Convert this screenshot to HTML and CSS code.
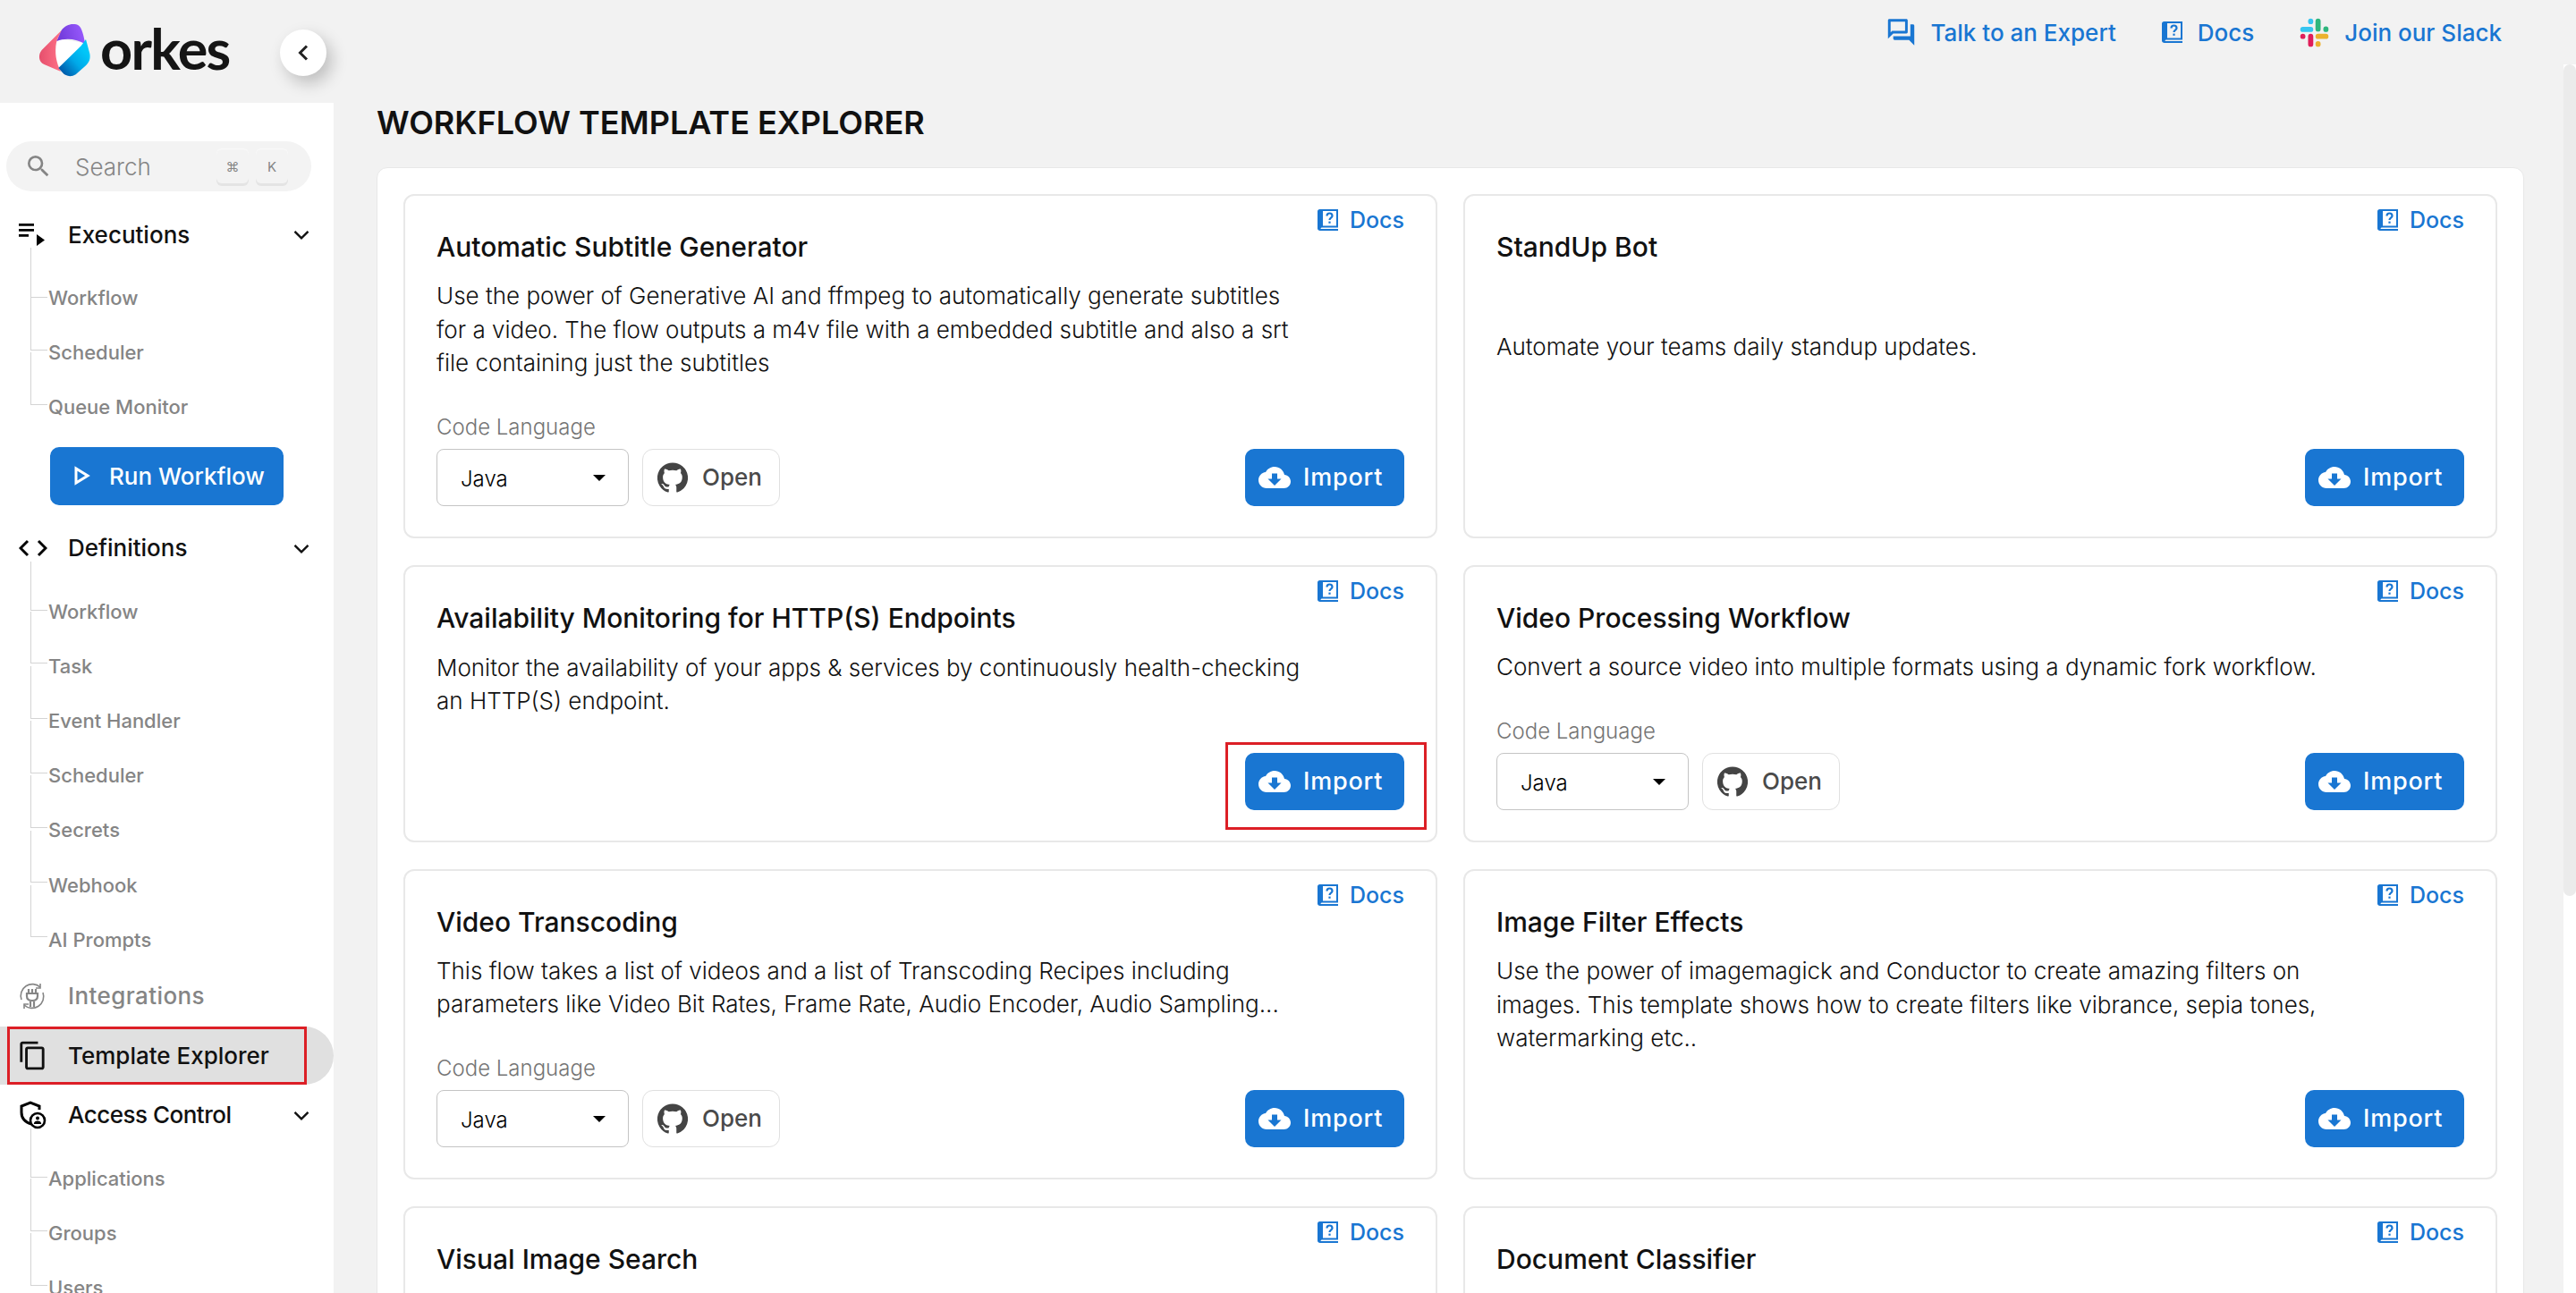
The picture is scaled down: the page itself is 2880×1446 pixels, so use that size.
FILE: index.html
```html
<!DOCTYPE html>
<html lang="en">
  <head>
    <title>Workflow Template Explorer</title>
    <meta charset="UTF-8" />
    <link rel="stylesheet" href="styles.css">
  </head>
  <body>
    <svg class="icon-defs" width="0" height="0">
      <symbol id="i-book" viewBox="0 0 23 24">
        <path fill="#1976d2" d="M2.5 0H23v20.5H5.5c-1 0-2 .5-2 1.2S4.500 22 5.500 22H23v2H3c-1.700 0-3-1-3-2.500V2.500C0 1 1 0 2.500 0zM6 2v16.500h15V2H6z"/>
        <path fill="none" stroke="#1976d2" stroke-width="2.200" d="M10.500 7.500c0-4 6-4 6 0 0 2.200-3 2.200-3 4.500"/>
        <rect x="12.400" y="13.600" width="2.200" height="2.200" fill="#1976d2"/>
      </symbol>
      <symbol id="i-cloud" viewBox="0 0 24 24">
        <path fill="#fff" d="M19.350 10.040C18.670 6.590 15.640 4 12 4 9.110 4 6.600 5.640 5.350 8.040 2.340 8.360 0 10.910 0 14c0 3.310 2.690 6 6 6h13c2.760 0 5-2.240 5-5 0-2.640-2.050-4.780-4.650-4.960zM17 13l-5 5-5-5h3V9h4v4h3z"/>
      </symbol>
      <symbol id="i-github" viewBox="0 0 24 24">
        <path fill="#444" d="M12 .3a12 12 0 0 0-3.800 23.400c.6.100.8-.3.8-.6v-2c-3.300.7-4-1.600-4-1.600-.6-1.400-1.400-1.800-1.400-1.800-1-.7.1-.7.1-.7 1.200.1 1.800 1.200 1.800 1.200 1 1.800 2.800 1.300 3.500 1 .1-.8.4-1.300.8-1.600-2.700-.3-5.500-1.300-5.500-6 0-1.200.5-2.300 1.300-3.100-.2-.4-.6-1.600 0-3.200 0 0 1-.3 3.400 1.200a11.500 11.500 0 0 1 6 0c2.300-1.500 3.300-1.200 3.300-1.200.6 1.600.2 2.800 0 3.200.9.8 1.300 1.900 1.300 3.200 0 4.600-2.800 5.600-5.500 5.900.5.4.9 1 .9 2.200v3.300c0 .3.1.7.8.6A12 12 0 0 0 12 .3"/>
      </symbol>
      <symbol id="i-chevron" viewBox="0 0 18 12">
        <path fill="none" stroke="#111" stroke-width="2.400" d="M1.500 1.800 9 9.300l7.500-7.500"/>
      </symbol>
    </svg>

    <div class="app">
      <aside class="sidebar">
        <div class="brand">
          <div class="logo">
            <svg class="logo-mark" width="80" height="72" viewBox="0 0 240 216">
              <defs>
                <linearGradient id="lg-pink" x1="0" y1="0.500" x2="1" y2="0.500">
                  <stop offset="0" stop-color="#e64f6d"/>
                  <stop offset="1" stop-color="#ff7488"/>
                </linearGradient>
                <linearGradient id="lg-purple" x1="0" y1="0.500" x2="1" y2="0.300">
                  <stop offset="0" stop-color="#6f38d8"/>
                  <stop offset="1" stop-color="#9a5cff"/>
                </linearGradient>
                <linearGradient id="lg-blue" x1="0.150" y1="0.950" x2="0.800" y2="0.300">
                  <stop offset="0" stop-color="#0058a8"/>
                  <stop offset="0.550" stop-color="#00a8e8"/>
                  <stop offset="1" stop-color="#00c6f8"/>
                </linearGradient>
              </defs>
              <path fill="#fff" d="M84 70 172 84 170 100 92 170 78 130z"/>
              <path fill="url(#lg-pink)" d="M98 42 32 108C20 122 20 148 40 156L96 180 90 168C78 140 74 100 84 72L100 40z"/>
              <path fill="url(#lg-purple)" d="M98 42C110 24 130 18 148 22 164 26 170 46 178 88 150 70 112 66 82 78z"/>
              <path fill="url(#lg-blue)" d="M180 72 193 120C196 136 192 148 180 160L146 190C130 200 112 196 102 184L88 168 164 94z"/>
            </svg>
            <span class="logo-text">orkes</span>
          </div>
          <button type="button" class="collapse-btn">
            <svg width="14" height="20" viewBox="0 0 14 20"><path fill="none" stroke="#222" stroke-width="3" d="M11 2.500 3.500 10l7.500 7.500"/></svg>
          </button>
        </div>

        <nav class="nav">
          <div class="search">
            <svg class="search-icon" width="32" height="32" viewBox="0 0 24 24"><path fill="#858585" d="M15.500 14h-.79l-.28-.27A6.471 6.471 0 0 0 16 9.500 6.500 6.500 0 1 0 9.500 16c1.610 0 3.090-.59 4.230-1.570l.27.28v.79l5 4.990L20.490 19l-4.990-5zm-6 0C7.010 14 5 11.990 5 9.500S7.010 5 9.500 5 14 7.010 14 9.500 11.990 14 9.500 14z"/></svg>
            <span class="search-label">Search</span>
            <span class="kbd">⌘</span>
            <span class="kbd">K</span>
          </div>

          <div class="nav-row nav-row-first">
            <svg class="nav-icon" width="30" height="26" viewBox="0 0 30 26"><path fill="#000" d="M0 1h17v2.800H0zM0 7h17v2.800H0zM0 13h11v2.800H0zM20 13l9 6.500-9 6.500z"/></svg>
            <span class="nav-title">Executions</span>
            <svg class="nav-chevron" width="18" height="12"><use href="#i-chevron"/></svg>
          </div>
          <ul class="sub-list">
            <li>Workflow</li>
            <li>Scheduler</li>
            <li>Queue Monitor</li>
          </ul>

          <button type="button" class="run-btn">
            <svg width="18" height="22" viewBox="0 0 18 22"><path fill="none" stroke="#fff" stroke-width="3" d="M2 3v16l13-8z"/></svg>
            Run Workflow
          </button>

          <div class="nav-row nav-row-defs">
            <svg class="nav-icon" width="32" height="20" viewBox="0 0 32 20"><path fill="none" stroke="#000" stroke-width="3" d="M10 2 2 10l8 8M22 2l8 8-8 8"/></svg>
            <span class="nav-title">Definitions</span>
            <svg class="nav-chevron" width="18" height="12"><use href="#i-chevron"/></svg>
          </div>
          <ul class="sub-list">
            <li>Workflow</li>
            <li>Task</li>
            <li>Event Handler</li>
            <li>Scheduler</li>
            <li>Secrets</li>
            <li>Webhook</li>
            <li>AI Prompts</li>
          </ul>

          <div class="nav-row nav-row-muted">
            <svg class="nav-icon" width="30" height="30" viewBox="0 0 30 30">
              <g fill="none" stroke="#858585" stroke-width="1.600">
                <path d="M3 19A13 13 0 0 1 24 5M27 11A13 13 0 0 1 6 25"/>
                <path d="M24 1v5h-5M6 29v-5h5"/>
                <path stroke-width="2.200" d="M11 7v5M15 7v5M19 7v5M9 12h12v3c0 3-2 5-6 5s-6-2-6-5zM13 20v7M17 20v7"/>
              </g>
            </svg>
            <span class="nav-title">Integrations</span>
          </div>

          <div class="nav-row nav-row-active">
            <svg class="nav-icon" width="30" height="33" viewBox="1.500 .5 20 23"><path fill="#111" d="M16 1H4c-1.100 0-2 .9-2 2v14h2V3h12V1zm3 4H8c-1.100 0-2 .9-2 2v14c0 1.100.9 2 2 2h11c1.100 0 2-.9 2-2V7c0-1.100-.9-2-2-2zm0 16H8V7h11v14z"/></svg>
            <span class="nav-title">Template Explorer</span>
            <span class="mark-box"></span>
          </div>

          <div class="nav-row nav-row-access">
            <svg class="nav-icon" width="32" height="32" viewBox="0 0 32 32">
              <path fill="none" stroke="#000" stroke-width="3" d="M14 26C7 24 3 19 3 13V6l10-4 10 4v4"/>
              <circle cx="21" cy="22" r="8" fill="#fff" stroke="#000" stroke-width="2.600"/>
              <circle cx="21" cy="19.500" r="2" fill="#000"/>
              <path fill="#000" d="M16.800 26c0-2.500 2-3.500 4.200-3.500s4.200 1 4.200 3.500z"/>
            </svg>
            <span class="nav-title nav-title-tight">Access Control</span>
            <svg class="nav-chevron" width="18" height="12"><use href="#i-chevron"/></svg>
          </div>
          <ul class="sub-list">
            <li>Applications</li>
            <li>Groups</li>
            <li>Users</li>
          </ul>
        </nav>
      </aside>

      <div class="main">
        <header class="topbar">
          <a class="top-link">
            <svg width="31" height="30" viewBox="1.800 1.800 20.400 20.400"><path fill="#1976d2" d="M15 4v7H5.170L4 12.170V4h11m1-2H3c-.55 0-1 .45-1 1v14l4-4h10c.55 0 1-.45 1-1V3c0-.55-.45-1-1-1zm5 4h-2v9H6v2c0 .55.45 1 1 1h11l4 4V7c0-.55-.45-1-1-1z"/></svg>
            Talk to an Expert
          </a>
          <a class="top-link">
            <svg width="23" height="24"><use href="#i-book"/></svg>
            Docs
          </a>
          <a class="top-link">
            <svg width="33" height="33" viewBox="0 0 32 32" fill="none" stroke-linecap="round" stroke-width="5.600">
              <path stroke="#36c5f0" d="M3.500 12.500h8.500M12 3.500v.5"/>
              <path stroke="#2eb67d" d="M20 3.500V12M28.500 12v.5"/>
              <path stroke="#ecb22e" d="M20 20h8.500M20 28.500v-.5"/>
              <path stroke="#e01e5a" d="M12 20v8.500M3.500 20v.01"/>
            </svg>
            Join our Slack
          </a>
        </header>

        <div class="body-row">
          <main class="content">
            <h1 class="page-title">WORKFLOW TEMPLATE EXPLORER</h1>
            <section class="panel">
              <div class="card-grid">

                <article class="card">
                  <a class="docs-link"><svg width="23" height="24"><use href="#i-book"/></svg>Docs</a>
                  <h2 class="card-title">Automatic Subtitle Generator</h2>
                  <div class="card-desc"><p>Use the power of Generative AI and ffmpeg to automatically generate subtitles for a video. The flow outputs a m4v file with a embedded subtitle and also a srt file containing just the subtitles</p></div>
                  <div class="card-foot">
                    <div class="code-picker">
                      <label>Code Language</label>
                      <div class="picker-row">
                        <div class="select">Java<span class="caret"></span></div>
                        <button type="button" class="open-btn"><svg width="34" height="34"><use href="#i-github"/></svg>Open</button>
                      </div>
                    </div>
                    <button type="button" class="import-btn"><svg width="36" height="36"><use href="#i-cloud"/></svg>Import</button>
                  </div>
                </article>

                <article class="card">
                  <a class="docs-link"><svg width="23" height="24"><use href="#i-book"/></svg>Docs</a>
                  <h2 class="card-title">StandUp Bot</h2>
                  <div class="card-desc"><p>Automate your teams daily standup updates.</p></div>
                  <div class="card-foot card-foot-end">
                    <button type="button" class="import-btn"><svg width="36" height="36"><use href="#i-cloud"/></svg>Import</button>
                  </div>
                </article>

                <article class="card">
                  <a class="docs-link"><svg width="23" height="24"><use href="#i-book"/></svg>Docs</a>
                  <h2 class="card-title">Availability Monitoring for HTTP(S) Endpoints</h2>
                  <div class="card-desc"><p>Monitor the availability of your apps &amp; services by continuously health-checking an HTTP(S) endpoint.</p></div>
                  <div class="card-foot card-foot-end">
                    <button type="button" class="import-btn import-marked"><svg width="36" height="36"><use href="#i-cloud"/></svg>Import</button>
                  </div>
                </article>

                <article class="card">
                  <a class="docs-link"><svg width="23" height="24"><use href="#i-book"/></svg>Docs</a>
                  <h2 class="card-title">Video Processing Workflow</h2>
                  <div class="card-desc"><p>Convert a source video into multiple formats using a dynamic fork workflow.</p></div>
                  <div class="card-foot">
                    <div class="code-picker">
                      <label>Code Language</label>
                      <div class="picker-row">
                        <div class="select">Java<span class="caret"></span></div>
                        <button type="button" class="open-btn"><svg width="34" height="34"><use href="#i-github"/></svg>Open</button>
                      </div>
                    </div>
                    <button type="button" class="import-btn"><svg width="36" height="36"><use href="#i-cloud"/></svg>Import</button>
                  </div>
                </article>

                <article class="card">
                  <a class="docs-link"><svg width="23" height="24"><use href="#i-book"/></svg>Docs</a>
                  <h2 class="card-title">Video Transcoding</h2>
                  <div class="card-desc"><p>This flow takes a list of videos and a list of Transcoding Recipes including parameters like Video Bit Rates, Frame Rate, Audio Encoder, Audio Sampling...</p></div>
                  <div class="card-foot">
                    <div class="code-picker">
                      <label>Code Language</label>
                      <div class="picker-row">
                        <div class="select">Java<span class="caret"></span></div>
                        <button type="button" class="open-btn"><svg width="34" height="34"><use href="#i-github"/></svg>Open</button>
                      </div>
                    </div>
                    <button type="button" class="import-btn"><svg width="36" height="36"><use href="#i-cloud"/></svg>Import</button>
                  </div>
                </article>

                <article class="card">
                  <a class="docs-link"><svg width="23" height="24"><use href="#i-book"/></svg>Docs</a>
                  <h2 class="card-title">Image Filter Effects</h2>
                  <div class="card-desc"><p>Use the power of imagemagick and Conductor to create amazing filters on images. This template shows how to create filters like vibrance, sepia tones, watermarking etc..</p></div>
                  <div class="card-foot card-foot-end">
                    <button type="button" class="import-btn"><svg width="36" height="36"><use href="#i-cloud"/></svg>Import</button>
                  </div>
                </article>

                <article class="card">
                  <a class="docs-link"><svg width="23" height="24"><use href="#i-book"/></svg>Docs</a>
                  <h2 class="card-title">Visual Image Search</h2>
                </article>

                <article class="card">
                  <a class="docs-link"><svg width="23" height="24"><use href="#i-book"/></svg>Docs</a>
                  <h2 class="card-title">Document Classifier</h2>
                </article>

              </div>
            </section>
          </main>
          <div class="scroll-track"><div class="scroll-thumb"></div></div>
        </div>
      </div>
    </div>
  </body>
</html>
```

FILE: styles.css
```css
* {
  box-sizing: border-box;
}

html, body {
  margin: 0;
  height: 100%;
  overflow: hidden;
}

body {
  font-family: Inter, "Noto Sans", sans-serif;
  background-color: #f2f2f2;
  color: #111;
}

button {
  font-family: inherit;
  cursor: pointer;
}

.icon-defs {
  position: absolute;
}

.app {
  display: flex;
  height: 100vh;
}

/* sidebar */
.sidebar {
  width: 373px;
  flex: none;
  display: flex;
  flex-direction: column;
}

.brand {
  height: 115px;
  flex: none;
  display: flex;
  align-items: flex-start;
  justify-content: space-between;
  padding: 20px 8px 0 36px;
}

.logo {
  display: flex;
  align-items: center;
}

.logo-text {
  font-family: Lato, sans-serif;
  font-weight: 700;
  font-size: 63px;
  line-height: 72px;
  letter-spacing: -1.7px;
  color: #151515;
  margin-left: -4px;
  margin-top: -4px;
}

.collapse-btn {
  width: 52px;
  height: 52px;
  margin-top: 13px;
  border: 0;
  border-radius: 50%;
  background-color: white;
  box-shadow: 6px 8px 18px rgba(0, 0, 0, 0.22);
  display: flex;
  align-items: center;
  justify-content: center;
  padding: 0;
}

.nav {
  flex: 1;
  background-color: white;
  padding-top: 43px;
  overflow: hidden;
}

.search {
  margin-left: 7px;
  width: 341px;
  height: 56px;
  border-radius: 28px;
  background-color: #f3f3f3;
  display: flex;
  align-items: center;
  padding-left: 20px;
  color: #858585;
}

.search-label {
  font-size: 26px;
  font-weight: 300;
  margin-left: 25px;
  flex: 1;
}

.kbd {
  width: 36px;
  height: 38px;
  margin-right: 8px;
  border-radius: 6px;
  background-color: #f3f3f3;
  box-shadow: 0 3px 0 #e4e4e4, 0 -1px 0 #fafafa;
  font-size: 15px;
  display: flex;
  align-items: center;
  justify-content: center;
}

.kbd:last-child {
  margin-right: 26px;
}

.nav-row {
  position: relative;
  display: flex;
  align-items: center;
  height: 44px;
  padding-left: 21px;
}

.nav-row-first {
  margin-top: 26px;
}

.nav-row-defs {
  margin-top: 26px;
}

.nav-row-muted {
  margin-top: 11px;
  color: #858585;
}

.nav-row-muted .nav-title {
  letter-spacing: 0.4px;
}

.nav-row-active {
  margin-top: 12px;
  height: 65px;
  width: 373px;
  background-color: #e0e0e0;
  border-radius: 0 33px 33px 0;
}

.nav-row-access {
  margin-top: 12px;
}

.nav-icon {
  flex: none;
}

.nav-title {
  position: absolute;
  left: 76px;
  font-size: 26px;
  font-weight: 500;
}

.nav-title-tight {
  letter-spacing: -0.5px;
}

.nav-chevron {
  position: absolute;
  left: 328px;
  top: 17px;
}

.mark-box {
  position: absolute;
  left: 8px;
  top: 0;
  width: 335px;
  height: 65px;
  border: 3px solid #dc1f26;
}

.sub-list {
  list-style: none;
  margin: 18px 0 0;
  padding: 0;
}

.sub-list li {
  position: relative;
  height: 61.2px;
  line-height: 62px;
  padding-left: 54px;
  font-size: 22px;
  font-weight: 500;
  color: #858585;
}

.sub-list li::before {
  content: "";
  position: absolute;
  left: 34px;
  width: 18px;
  top: -30px;
  bottom: calc(50% + 2px);
  border-left: 1px solid #d4d4d4;
  border-bottom: 1px solid #d4d4d4;
}

.sub-list li:first-child::before {
  top: -25px;
  bottom: 50%;
}

.run-btn {
  margin: 14px 0 0 56px;
  width: 261px;
  height: 65px;
  border: 0;
  border-radius: 10px;
  background-color: #1976d2;
  color: white;
  font-size: 26px;
  font-weight: 500;
  display: flex;
  align-items: center;
  gap: 21px;
  padding-left: 27px;
}

/* main column */
.main {
  flex: 1;
  min-width: 0;
  display: flex;
  flex-direction: column;
}

.topbar {
  height: 72px;
  flex: none;
  display: flex;
  align-items: center;
  justify-content: flex-end;
  gap: 51px;
  padding-right: 83px;
}

.top-link {
  display: flex;
  align-items: center;
  gap: 17px;
  font-size: 26px;
  font-weight: 500;
  color: #1976d2;
}

.body-row {
  flex: 1;
  display: flex;
  min-height: 0;
}

.content {
  flex: 1;
  min-width: 0;
  padding: 43px 44px 0 48px;
}

.page-title {
  margin: 0 0 28px;
  font-size: 36px;
  line-height: 44px;
  font-weight: 600;
  color: #111;
}

.panel {
  background-color: white;
  border: 1px solid #e8e8e8;
  border-radius: 12px;
  padding: 29px;
}

.card-grid {
  display: grid;
  grid-template-columns: 1fr 1fr;
  gap: 30px 29px;
}

.card {
  display: flex;
  flex-direction: column;
  min-height: 310px;
  border: 2px solid #e8e8e8;
  border-radius: 12px;
  padding: 13px 35px 34px;
}

.docs-link {
  align-self: flex-end;
  display: flex;
  align-items: center;
  gap: 13px;
  height: 28px;
  font-size: 25px;
  font-weight: 500;
  color: #1976d2;
}

.card-title {
  margin: -4px 0 0;
  font-size: 30px;
  line-height: 40px;
  font-weight: 500;
  color: #111;
}

.card-desc {
  flex: 1;
  display: flex;
  align-items: center;
  margin-top: 16px;
}

.card-desc p {
  margin: 0;
  width: 975px;
  font-size: 26px;
  line-height: 37.5px;
  font-weight: 300;
  color: #111;
}

.card-foot {
  margin-top: 38px;
  display: flex;
  align-items: flex-end;
  justify-content: space-between;
}

.card-foot-end {
  justify-content: flex-end;
}

.code-picker label {
  display: block;
  font-size: 24px;
  line-height: 29px;
  font-weight: 300;
  color: #757575;
  margin-bottom: 10px;
}

.picker-row {
  display: flex;
  gap: 15px;
}

.select {
  position: relative;
  width: 215px;
  height: 64px;
  border: 1px solid #c4c4c4;
  border-radius: 8px;
  padding-left: 26px;
  font-size: 24px;
  font-weight: 300;
  line-height: 66px;
  color: #000;
}

.caret {
  position: absolute;
  left: 174px;
  top: 28px;
  border-top: 7px solid #000;
  border-left: 7px solid transparent;
  border-right: 7px solid transparent;
}

.open-btn {
  width: 154px;
  height: 64px;
  border: 1px solid #e0e0e0;
  border-radius: 12px;
  background-color: white;
  color: #4a4a4a;
  font-size: 26px;
  font-weight: 500;
  display: flex;
  align-items: center;
  gap: 16px;
  padding: 0 0 0 16px;
}

.import-btn {
  position: relative;
  width: 178px;
  height: 64px;
  border: 0;
  border-radius: 10px;
  background-color: #1976d2;
  color: white;
  font-size: 27px;
  font-weight: 500;
  letter-spacing: 0.8px;
  display: flex;
  align-items: center;
  gap: 14px;
  padding: 0 0 0 15px;
}

.import-marked::after {
  content: "";
  position: absolute;
  left: -22px;
  top: -12px;
  width: 219px;
  height: 92px;
  border: 3px solid #dc1f26;
}

.scroll-track {
  width: 14px;
  flex: none;
  background-color: white;
}

.scroll-thumb {
  height: 930px;
  border-radius: 7px;
  background-color: #ebebeb;
}
```
